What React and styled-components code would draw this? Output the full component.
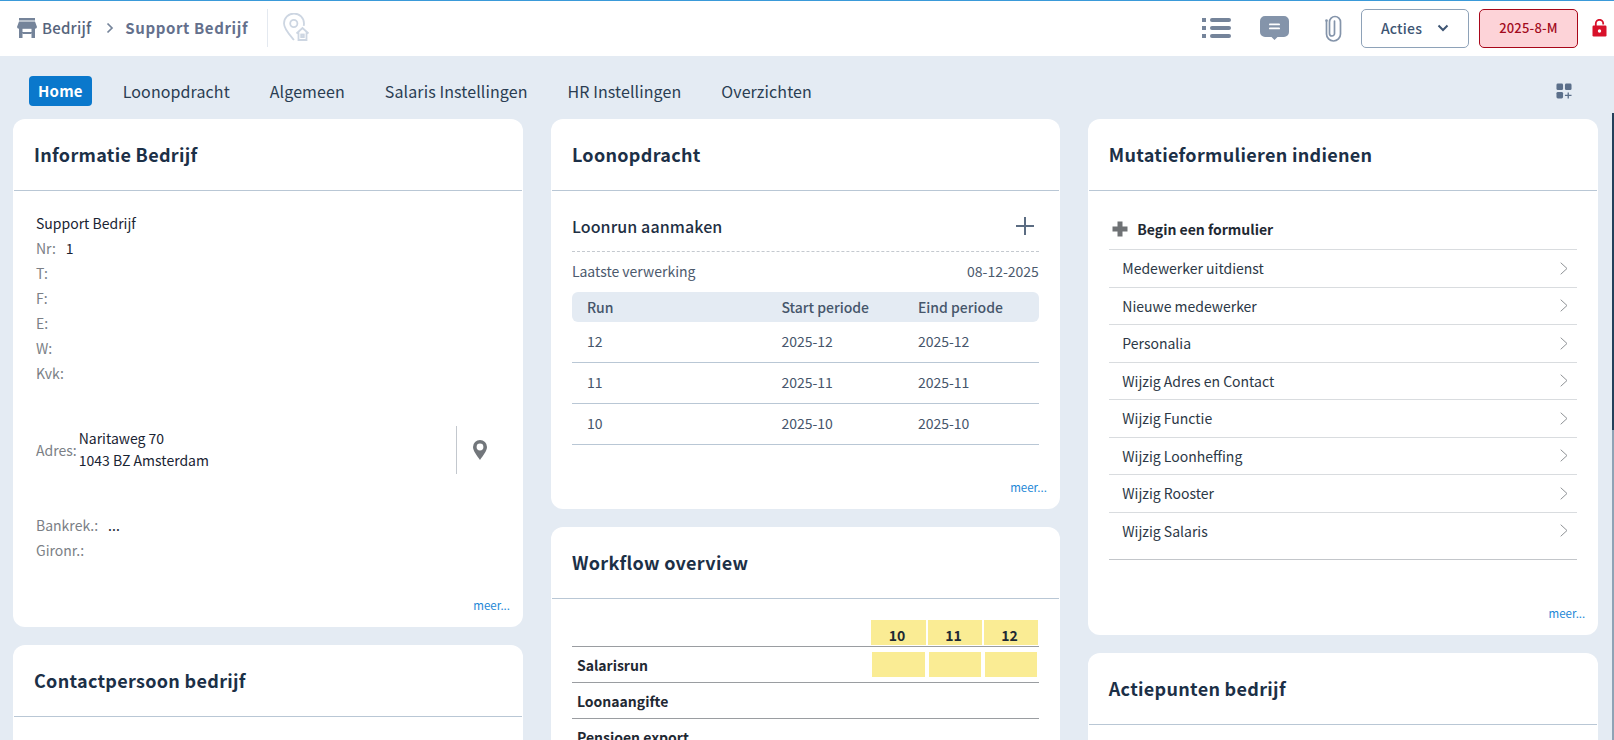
import React from 'react';
import styled, { createGlobalStyle } from 'styled-components';

const GlobalStyle = createGlobalStyle`
  html, body {
    margin: 0;
    padding: 0;
    height: 100%;
    overflow: hidden;
    background: #e4ebf3;
    font-family: "Noto Sans CJK SC", "Noto Sans", sans-serif;
    color: #1f3044;
  }
`;

const Page = styled.div`
  height: 740px;
  overflow: hidden;
  display: flex;
  flex-direction: column;
`;

const TopBar = styled.header`
  height: 54px;
  flex: none;
  background: white;
  border-top: 1px solid #3a9ad9;
  padding-bottom: 1px;
  display: flex;
  align-items: center;
  padding-left: 17px;
  padding-right: 7px;
`;

const Crumb = styled.span`
  font-size: 15px;
  line-height: 20px;
  font-weight: ${(p) => (p.$strong ? 700 : 500)};
  color: ${(p) => (p.$strong ? '#64708c' : '#56647c')};
  letter-spacing: ${(p) => (p.$strong ? '0.6px' : '0.2px')};
  margin-left: ${(p) => p.$ml || 0}px;
`;

const BarDivider = styled.div`
  width: 1px;
  height: 38px;
  background: #e4e9f0;
  margin: 0 14px 0 19px;
`;

const Spacer = styled.div`
  flex: 1;
`;

const IconGap = styled.div`
  flex: none;
  width: ${(p) => p.$w}px;
`;

const ActionsButton = styled.button`
  width: 108px;
  height: 39px;
  box-sizing: border-box;
  border: 1px solid #8ea2b8;
  border-radius: 5px;
  background: white;
  color: #3e5573;
  font: 500 14px/20px "Noto Sans CJK SC", "Noto Sans", sans-serif;
  letter-spacing: 0.2px;
  display: flex;
  align-items: center;
  justify-content: center;
  gap: 15px;
  padding: 0;
  margin-left: 18px;
`;

const PeriodButton = styled.button`
  width: 99px;
  height: 39px;
  box-sizing: border-box;
  border: 1px solid #a8071a;
  border-radius: 5px;
  background: #fdd3d8;
  color: #a30b1d;
  font: 500 13px/20px "Noto Sans CJK SC", "Noto Sans", sans-serif;
  letter-spacing: 0.2px;
  margin-left: 10px;
  padding: 0;
`;

const NavRow = styled.nav`
  height: 57px;
  flex: none;
  display: flex;
  align-items: center;
  padding: 6px 42px 0 29px;
  gap: 40px;
`;

const NavItem = styled.a`
  font-size: ${(p) => (p.$active ? 15 : 16)}px;
  line-height: 30px;
  letter-spacing: ${(p) => (p.$active ? '0.2px' : '0.1px')};
  color: ${(p) => (p.$active ? 'white' : '#2a3d52')};
  font-weight: ${(p) => (p.$active ? 700 : 400)};
  background: ${(p) => (p.$active ? '#0a78cc' : 'transparent')};
  border-radius: 4px;
  padding: ${(p) => (p.$active ? '0 9px' : '0')};
  margin-right: ${(p) => (p.$active ? '-9px' : '0')};
`;

const Columns = styled.main`
  flex: 1;
  min-height: 0;
  display: grid;
  grid-template-columns: 510px 509px 510.5px;
  column-gap: 27.9px;
  padding-left: 13px;
  align-items: start;
`;

const Column = styled.div`
  display: flex;
  flex-direction: column;
  gap: 18px;
`;

const Card = styled.section`
  background: white;
  border-radius: 12px;
  height: ${(p) => p.$h}px;
  position: relative;
  overflow: hidden;
`;

const CardHead = styled.div`
  height: 72px;
  box-sizing: border-box;
  border-bottom: 1px solid #b9c7d5;
  margin: 0 1px;
  padding: 0 0 2px 20px;
  display: flex;
  align-items: center;
`;

const CardTitle = styled.h3`
  margin: 0;
  font-size: 18px;
  line-height: 24px;
  font-weight: 700;
  color: #1c3047;
  letter-spacing: 0.3px;
`;

const More = styled.a`
  position: absolute;
  right: 13px;
  bottom: 14px;
  font-size: 11.500px;
  line-height: 16px;
  color: #1c87d6;
`;

const InfoBody = styled.div`
  padding: 19px 0 0 23px;
`;

const InfoRow = styled.div`
  display: flex;
  height: 25px;
  align-items: center;
  font-size: 14px;
  color: #1a2433;
`;

const Label = styled.span`
  color: #7b7f86;
  font-size: 14px;
  margin-right: ${(p) => p.$mr || 0}px;
`;

const AddressRow = styled.div`
  display: flex;
  align-items: center;
  height: 48px;
  margin: 41px 21px 0 0;
`;

const AddressText = styled.div`
  flex: 1;
  font-size: 14px;
  line-height: 22px;
  color: #1a2433;
  margin: -1px 0 1px 2px;
`;

const PinCell = styled.div`
  width: 45px;
  height: 48px;
  border-left: 1px solid #c3c8ce;
  display: flex;
  align-items: center;
  justify-content: center;
`;

const BankBlock = styled.div`
  margin-top: 38px;
`;

const RunBody = styled.div`
  padding: 0 21px;
`;

const RunHead = styled.div`
  height: 51px;
  padding: 9px 5px 0 0;
  display: flex;
  align-items: center;
  justify-content: space-between;
  border-bottom: 1px dashed #c4c9cf;
`;

const RunTitle = styled.div`
  font-size: 16px;
  font-weight: 500;
  letter-spacing: 0.1px;
  color: #1f3044;
`;

const LastRun = styled.div`
  display: flex;
  justify-content: space-between;
  height: 38px;
  padding-bottom: 2px;
  align-items: center;
  font-size: 14px;
  color: #4c5a6d;
`;

const RunGrid = styled.div`
  display: grid;
  grid-template-columns: 194.500px 136.500px 1fr;
  padding-left: 15px;
  align-items: center;
  font-size: 14px;
  color: #46566b;
`;

const RunHeader = styled(RunGrid)`
  height: 30px;
  background: #e4ebf3;
  border-radius: 6px;
  font-weight: 500;
`;

const RunRow = styled(RunGrid)`
  height: 38px;
  padding-bottom: 2px;
  border-bottom: 1px solid #b9c7d5;
`;

const FlowBody = styled.div`
  padding: 21px 21px 0 21px;
`;

const FlowGrid = styled.div`
  display: grid;
  grid-template-columns: 1fr 57px 56px 56px;
  align-items: center;
  border-bottom: 1px solid #9a9da1;
  height: ${(p) => p.$h}px;
`;

const FlowHeadCell = styled.div`
  background: #faec94;
  height: 25px;
  box-sizing: border-box;
  align-self: start;
  margin: 0 1px;
  padding: 6px 3px 0 0;
  font-size: 14px;
  font-weight: 700;
  line-height: 19px;
  text-align: center;
  color: #1f2933;
`;

const FlowCell = styled.div`
  background: #faec94;
  height: 25px;
  margin: 0 2px;
`;

const FlowLabel = styled.div`
  font-size: 14px;
  font-weight: 700;
  padding-left: 5px;
  color: #1f2933;
  white-space: nowrap;
`;

const FormBody = styled.div`
  padding: 18px 21px 0 21.500px;
`;

const FormStart = styled.div`
  height: 40px;
  display: flex;
  align-items: center;
  gap: 9px;
  padding-left: 3px;
  font-size: 14px;
  font-weight: 700;
  color: #1f2933;
  border-bottom: 1px solid #d9dcdf;
`;

const FormRow = styled.div`
  height: 37.500px;
  box-sizing: border-box;
  display: flex;
  align-items: center;
  justify-content: space-between;
  padding: 0 9px 0 13px;
  font-size: 14px;
  color: #2c3846;
  border-bottom: 1px solid #d9dcdf;
  &:last-child {
    height: 47px;
    padding-bottom: 10px;
    border-bottom: 1px solid #c3c6ca;
  }
`;

const ScrollTrack = styled.div`
  position: absolute;
  top: 113px;
  right: 0;
  bottom: 0;
  width: 2px;
  background: #8fa3b5;
`;

const ScrollThumb = styled.div`
  height: 317px;
  background: #24405a;
`;

const IconStore = () => (
  <svg width="20" height="20" viewBox="0 0 20 20" fill="#75849a">
    <rect x="2" y="0" width="16" height="2.500" />
    <path d="M2 3.500h16l2 5.500a2 2 0 0 1-2 1.800v9.200h-3.500v-5H5.500v5H2v-9.200A2 2 0 0 1 0 9z" />
    <rect x="5.500" y="10.800" width="9" height="3.200" fill="white" />
    <rect x="5.500" y="14" width="9" height="2" />
  </svg>
);

const IconCrumbArrow = () => (
  <svg width="10" height="12" viewBox="0 0 10 12" fill="none" stroke="#75849a" strokeWidth="1.700" style={{ marginLeft: 14 }}>
    <path d="M2.500 1.500 7 6l-4.500 4.500" />
  </svg>
);

const IconPinHome = () => (
  <svg width="28" height="30" viewBox="0 0 28 30" fill="none" stroke="#cdd6e2" strokeWidth="1.800">
    <path d="M12 27C7 21 2 16 2 10.500a10 10 0 0 1 20 0c0 1-.1 1.600-.3 2.400" />
    <circle cx="11.800" cy="10.500" r="3.600" />
    <path d="M14.500 20.500 20.500 15l6 5.500M16.500 19.500V27h8v-7.500" />
    <rect x="19.200" y="21.500" width="2.600" height="2.600" />
  </svg>
);

const IconList = () => (
  <svg width="29" height="22" viewBox="0 0 29 22" fill="#75849a">
    <rect x="0" y="1" width="4" height="4" />
    <rect x="0" y="9" width="4" height="4" />
    <rect x="0" y="17" width="4" height="4" />
    <rect x="8" y="1" width="21" height="4" rx="2" />
    <rect x="8" y="9" width="21" height="4" rx="2" />
    <rect x="8" y="17" width="21" height="4" rx="2" />
  </svg>
);

const IconComment = () => (
  <svg width="31" height="26" viewBox="0 0 31 26">
    <path d="M6 1h19a5 5 0 0 1 5 5v11a5 5 0 0 1-5 5h-6.500L15.500 25 12.500 22H6a5 5 0 0 1-5-5V6a5 5 0 0 1 5-5z" fill="#8494aa" />
    <rect x="10" y="8.500" width="11" height="1.800" rx=".9" fill="white" />
    <rect x="10" y="12.500" width="11" height="1.800" rx=".9" fill="white" />
  </svg>
);

const IconClip = () => (
  <svg width="19" height="27" viewBox="0 0 19 27" fill="none" stroke="#8494aa" strokeWidth="1.700" strokeLinecap="round">
    <path d="M2.500 6v13a7 7 0 0 0 14 0V7a5.500 5.500 0 0 0-11 0v11.500a2.500 2.500 0 0 0 5 0V6" />
    <circle cx="2.500" cy="5.500" r="1.300" fill="#8494aa" stroke="none" />
  </svg>
);

const IconChevronDown = () => (
  <svg width="12" height="8" viewBox="0 0 12 8" fill="none" stroke="#3e5573" strokeWidth="2">
    <path d="M1.500 1.500 6 6l4.500-4.500" />
  </svg>
);

const IconLock = () => (
  <svg width="15" height="18" viewBox="0 0 15 18" style={{ marginLeft: 14 }}>
    <path d="M3.800 7V4.500a3.700 3.700 0 0 1 7.400 0V5.500" fill="none" stroke="#d8112a" strokeWidth="1.800" />
    <rect x="0.500" y="6.500" width="14" height="11" rx="1.200" fill="#d8112a" />
    <circle cx="7.500" cy="12" r="1.700" fill="white" />
  </svg>
);

const IconWidgets = () => (
  <svg width="16" height="16" viewBox="0 0 17 17" fill="#5b6f8a">
    <rect x="0.500" y="0.500" width="7" height="7" rx="1.500" />
    <rect x="9.500" y="0.500" width="7" height="7" rx="1.500" />
    <rect x="0.500" y="9.500" width="7" height="7" rx="1.500" />
    <path d="M12.300 10h1.400v2.500h2.800v1.400h-2.800v2.600h-1.400v-2.600H9.500v-1.400h2.800z" />
  </svg>
);

const IconMapPin = () => (
  <svg width="14" height="20" viewBox="0 0 14 20">
    <path fillRule="evenodd" d="M7 0a7 7 0 0 1 7 7c0 4-4 8.500-7 13C4 15.500 0 11 0 7a7 7 0 0 1 7-7zm0 3.600a3.400 3.400 0 1 0 0 6.800 3.400 3.400 0 0 0 0-6.800z" fill="#72767b" />
  </svg>
);

const IconPlusThin = () => (
  <svg width="18" height="18" viewBox="0 0 18 18" stroke="#5b6c82" strokeWidth="2">
    <path d="M9 0v18M0 9h18" />
  </svg>
);

const IconPlusBold = () => (
  <svg width="16" height="16" viewBox="0 0 16 16" fill="#6f7275">
    <path d="M5.500 0.500h5v5h5v5h-5v5h-5v-5h-5v-5h5z" />
  </svg>
);

const IconChevronRight = () => (
  <svg width="8" height="13" viewBox="0 0 8 13" fill="none" stroke="#8f9296" strokeWidth="1">
    <path d="M0.700 0.700 7 6.500l-6.300 5.800" />
  </svg>
);

const runs = [
  ['12', '2025-12', '2025-12'],
  ['11', '2025-11', '2025-11'],
  ['10', '2025-10', '2025-10'],
];

const forms = [
  'Medewerker uitdienst',
  'Nieuwe medewerker',
  'Personalia',
  'Wijzig Adres en Contact',
  'Wijzig Functie',
  'Wijzig Loonheffing',
  'Wijzig Rooster',
  'Wijzig Salaris',
];

const navItems = ['Loonopdracht', 'Algemeen', 'Salaris Instellingen', 'HR Instellingen', 'Overzichten'];

const App = () => (
  <Page>
    <GlobalStyle />
    <TopBar>
      <IconStore />
      <Crumb $ml={5}>Bedrijf</Crumb>
      <IconCrumbArrow />
      <Crumb $strong $ml={10}>Support Bedrijf</Crumb>
      <BarDivider />
      <IconPinHome />
      <Spacer />
      <IconList />
      <IconGap $w={28} />
      <IconComment />
      <IconGap $w={34} />
      <IconClip />
      <ActionsButton>Acties <IconChevronDown /></ActionsButton>
      <PeriodButton>2025-8-M</PeriodButton>
      <IconLock />
    </TopBar>

    <NavRow>
      <NavItem $active>Home</NavItem>
      {navItems.map((item) => (
        <NavItem key={item}>{item}</NavItem>
      ))}
      <Spacer />
      <IconWidgets />
    </NavRow>

    <Columns>
      <Column>
        <Card $h={508}>
          <CardHead><CardTitle>Informatie Bedrijf</CardTitle></CardHead>
          <InfoBody>
            <InfoRow>Support Bedrijf</InfoRow>
            <InfoRow><Label $mr={10}>Nr:</Label>1</InfoRow>
            <InfoRow><Label>T:</Label></InfoRow>
            <InfoRow><Label>F:</Label></InfoRow>
            <InfoRow><Label>E:</Label></InfoRow>
            <InfoRow><Label>W:</Label></InfoRow>
            <InfoRow><Label>Kvk:</Label></InfoRow>
            <AddressRow>
              <Label>Adres:</Label>
              <AddressText>Naritaweg 70<br />1043 BZ Amsterdam</AddressText>
              <PinCell><IconMapPin /></PinCell>
            </AddressRow>
            <BankBlock>
              <InfoRow><Label $mr={10}>Bankrek.:</Label>...</InfoRow>
              <InfoRow><Label>Gironr.:</Label></InfoRow>
            </BankBlock>
          </InfoBody>
          <More>meer...</More>
        </Card>
        <Card $h={200}>
          <CardHead><CardTitle>Contactpersoon bedrijf</CardTitle></CardHead>
        </Card>
      </Column>

      <Column>
        <Card $h={390}>
          <CardHead><CardTitle>Loonopdracht</CardTitle></CardHead>
          <RunBody>
            <RunHead>
              <RunTitle>Loonrun aanmaken</RunTitle>
              <IconPlusThin />
            </RunHead>
            <LastRun><span>Laatste verwerking</span><span>08-12-2025</span></LastRun>
            <RunHeader><span>Run</span><span>Start periode</span><span>Eind periode</span></RunHeader>
            {runs.map((r) => (
              <RunRow key={r[0]}><span>{r[0]}</span><span>{r[1]}</span><span>{r[2]}</span></RunRow>
            ))}
          </RunBody>
          <More>meer...</More>
        </Card>
        <Card $h={300}>
          <CardHead><CardTitle>Workflow overview</CardTitle></CardHead>
          <FlowBody>
            <FlowGrid $h={26}>
              <span />
              <FlowHeadCell>10</FlowHeadCell>
              <FlowHeadCell>11</FlowHeadCell>
              <FlowHeadCell>12</FlowHeadCell>
            </FlowGrid>
            <FlowGrid $h={35}>
              <FlowLabel>Salarisrun</FlowLabel>
              <FlowCell />
              <FlowCell />
              <FlowCell />
            </FlowGrid>
            <FlowGrid $h={35}><FlowLabel>Loonaangifte</FlowLabel></FlowGrid>
            <FlowGrid $h={35}><FlowLabel>Pensioen export</FlowLabel></FlowGrid>
          </FlowBody>
        </Card>
      </Column>

      <Column>
        <Card $h={516}>
          <CardHead><CardTitle>Mutatieformulieren indienen</CardTitle></CardHead>
          <FormBody>
            <FormStart><IconPlusBold />Begin een formulier</FormStart>
            {forms.map((f) => (
              <FormRow key={f}>{f}<IconChevronRight /></FormRow>
            ))}
          </FormBody>
          <More>meer...</More>
        </Card>
        <Card $h={200}>
          <CardHead><CardTitle>Actiepunten bedrijf</CardTitle></CardHead>
        </Card>
      </Column>
    </Columns>
    <ScrollTrack><ScrollThumb /></ScrollTrack>
  </Page>
);

export default App;
